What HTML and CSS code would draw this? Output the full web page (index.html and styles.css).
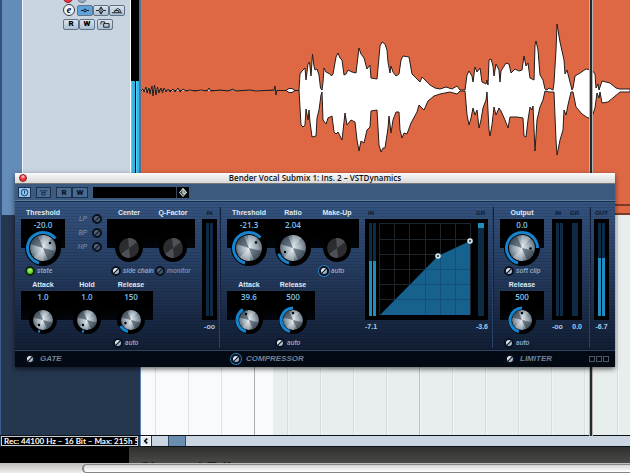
FILE: index.html
```html
<!DOCTYPE html>
<html lang="en">
<head>
<meta charset="utf-8">
<title>VSTDynamics</title>
<link rel="stylesheet" href="styles.css">
</head>
<body>
<svg class="defs" aria-hidden="true">
  <defs>
    <radialGradient id="metal"><stop offset="0" stop-color="#e4eaee"/><stop offset=".6" stop-color="#9dabb6"/><stop offset="1" stop-color="#64727f"/></radialGradient>
    <g id="big"><circle cx="18" cy="18" r="18"/><circle cx="18" cy="18" r="13" fill="url(#metal)"/><path d="M18 18 5.300 14A13 13 0 0 1 13 6zM18 18 30.800 21A13 13 0 0 1 23 30z" fill="#25313c" opacity=".55"/><path d="M18 18 17 5A13 13 0 0 1 26.500 8zM18 18 19 31A13 13 0 0 1 9 27z" fill="#fff" opacity=".3"/></g>
    <g id="small"><circle cx="18" cy="18" r="14"/><circle cx="18" cy="18" r="10" fill="url(#metal)"/><path d="M18 18 8.300 15.500A10 10 0 0 1 14 8.800zM18 18 27.700 20.500A10 10 0 0 1 22 27.200z" fill="#25313c" opacity=".55"/><path d="M18 18 17 8A10 10 0 0 1 24.500 10.500zM18 18 19 28A10 10 0 0 1 11 25z" fill="#fff" opacity=".3"/></g>
    <g id="off"><circle cx="18" cy="18" r="14"/><circle cx="18" cy="18" r="10" fill="#2b2d30"/><path d="M18 18 17 8A10 10 0 0 1 26 12zM18 18 19 28A10 10 0 0 1 10 24z" fill="#5c6064" opacity=".7"/></g>
  </defs>
</svg>

<main class="project">
  <div class="upper">
    <aside class="track">
      <div class="track-panel">
        <div class="row rec"><button class="dot red" aria-label="Record"></button><button class="dot" aria-label="Monitor"></button></div>
        <div class="row">
          <button class="edit" aria-label="Edit">e</button>
          <div class="group">
            <button class="chip on" aria-label="Inserts"><svg viewBox="0 0 15 10"><path d="M3 5h3M9 5h3"/><circle cx="7.500" cy="5" r="1.500"/></svg></button>
            <button class="chip" aria-label="Equalizer"><svg viewBox="0 0 15 10"><path d="M2 5h3M10 5h3M7.500 1 5 5l2.500 4L10 5zM7.500 2v6"/></svg></button>
            <button class="chip" aria-label="Sends"><svg viewBox="0 0 15 10"><path d="M2 7.500h11M5 7V5h4v2M6 4.500l2-2 3 2v2.500"/></svg></button>
          </div>
        </div>
        <div class="row">
          <div class="group"><button class="chip rw">R</button><button class="chip rw">W</button></div>
          <button class="chip" aria-label="Lock"><svg viewBox="0 0 15 10"><path d="M6 4h6v4H6zM3 5V2h4v2"/></svg></button>
        </div>
      </div>
      <div class="level"><i></i><i></i></div>
    </aside>
    <div class="clip">
      <svg class="wave" viewBox="141 0 489 204" preserveAspectRatio="none">
        <path d="M141 90.500H300M460 90.500h8M543 90.500h12"/>
        <path class="quiet" d="M141 91L143 89 144 92 146 87 147 93 149 88 150 94 152 86 153 96 154.500 85 156 95 157.500 87 159 93 161 88 162.500 93 164 88 166 92 168 89 170 92 173 89 175 92 178 88 180 92 183 89 186 91 190 90 195 91 201 90 207 91 209 88 211 91 220 90 228 91 233 89 236 91 250 90 256 91 274 90 275 86 276 95 277 90"/>
        <path class="body" d="M286 90.500l3-2h3l3 2-3 2h-3z"/>
        <path class="body" d="M299 90L300 74 302 71 305 68 306 80 308 64 309.500 62 311 76 312.500 54 314 66 315 70 317 69 319 75 320.500 88 322 90 323 82 324 68 326 72 330 74 331.500 76 333 74 336 57 338 53 340 58 342 60 344 75 346 74 348 70 352 72 356 73 358 56 359 48 361 54 364 58 367 69 370 65 371 78 377 79 378 68 380 46 382 42 385 44 387 50 388 62 390 73 391 66 393 72 396 76 399 74 401 60 403 56 409 57 412 74 416 78 420 82 422 77 426 81 430 85 435 88 440 89 446 87 452 89 457 86 460 90 465 90 467 75 469 71 472 76 473 82 475 67 477 72 480 68 482 82 486 84 487 80 488 85 489 60 491 59 493 66 494 76 496 64 499 70 500 82 501 71 506 63 509 64 511 73 515 69 519 71 522 70 524 56 526 66 528 63 530 78 534 80 535 45 536 41 538 50 540 75 543 80 545 89 547 90 549 88 553 90 554 83 556 50 557 24 560 42 564 60 565 74 567 70 570 82 572 90 573 88 575 76 580 73 586 69 592 70 595 74 596 88 598 84 599 90 602 81 610 83 616 88 620 89 630 89V92L620 92 614 97 608 102 602 103 600 92 599 98 597 93 595 108 592 117 588 118 582 114 576 107 573 92 571 92 568 105 566 115 564 110 563 130 560 140 557 155 556 140 554 92 549 92 545 91 543 100 540 107 537 120 535 151 533 106 532 110 530 107 528 120 526 137 524 136 523 118 517 117 510 117 508 128 505 120 501 111 499 108 496 115 494 107 492 125 490 136 489 130 487 92 486 100 483 108 481 120 479 128 477 110 475 115 473 108 471 118 469 125 467 115 465 91 460 91 457 94 450 92 440 94 434 96 428 101 424 110 419 105 417 112 411 123 407 134 404 133 402 138 400 130 399 112 396 112 393 120 391 133 389 116 388 128 385 148 383 148 381 152 379 145 377 110 371 111 370 127 367 130 364 143 361 141 359 151 357 140 355 122 351 120 347 125 345 113 342 140 338 132 336 134 334 132 332 116 328 118 326 124 323 120 322 92 321 95 319 110 317 118 316 136 312 137 310 122 309 110 308 120 306 109 305 125 303 127 301 125z"/>
      </svg>
      <div class="lane"></div>
    </div>
  </div>
  <div class="lower">
    <div class="empty"></div>
    <div class="grid"><div class="bright"></div></div>
  </div>
  <div class="status">
    <div class="rec-info"><span>Rec: 44100 Hz – 16 Bit – Max: 215h 54</span></div>
    <button class="step" aria-label="Scroll left"><svg viewBox="0 0 10 10"><path d="M6.500 2 3.500 5l3 3"/></svg></button>
    <div class="scroll"><i></i></div>
  </div>
  <div class="cursor"></div>
</main>
<footer class="under">
  <div class="under-bar"><p>Channel Edit</p></div>
  <div class="under-field"><div></div></div>
</footer>

<section class="plugin" aria-label="VSTDynamics">
  <header class="title"><button aria-label="Close"></button><h1>Bender Vocal Submix 1: Ins. 2 – VSTDynamics</h1></header>
  <div class="tools">
    <button class="tool on" aria-label="Power"><svg viewBox="0 0 13 11"><circle cx="6.500" cy="5.500" r="4"/><path d="M6.500 3v4"/></svg></button>
    <button class="tool bypass" aria-label="Bypass"><svg viewBox="0 0 13 11"><path d="M2 3.500h9M4.500 8.500V5.500h4v3z"/></svg></button>
    <div class="pair"><button class="tool">R</button><button class="tool">W</button></div>
    <div class="preset"><input aria-label="Preset" readonly><button aria-label="Presets"><svg viewBox="0 0 12 11"><path d="M6 1.500 9.500 5.500 6 9.500 2.500 5.500z"/><path d="M6 1.500 9.500 5.500 6 7z"/></svg></button></div>
  </div>

  <div class="rack">
    <div class="unit gate">
      <div class="banks">
        <div class="line">
          <div class="bank">
            <div class="dial"><label for="g1">Threshold</label><output>-20.0</output><div class="knob"><svg viewBox="0 0 36 36"><use href="#big"/><circle class="arc" cx="18" cy="18" r="15.500" pathLength="360" stroke-dasharray="218 360" transform="rotate(105 18 18)"/><circle cx="25" cy="13" r="1.200"/></svg><input id="g1" type="range"></div><label class="toggle"><input class="green" type="checkbox" checked>state</label></div>
          </div>
          <div class="filters"><label>LP<input type="checkbox"></label><label>BP<input type="checkbox"></label><label>HP<input type="checkbox"></label></div>
          <div class="bank">
            <div class="dial"><label for="g2">Center</label><output></output><div class="knob"><svg viewBox="0 0 36 36"><use href="#off"/></svg><input id="g2" type="range"></div><label class="toggle"><input class="lit" type="checkbox">side chain</label></div>
            <div class="dial"><label for="g3">Q-Factor</label><output></output><div class="knob"><svg viewBox="0 0 36 36"><use href="#off"/></svg><input id="g3" type="range"></div><label class="toggle dim"><input type="checkbox">monitor</label></div>
          </div>
        </div>
        <div class="line">
          <div class="bank">
            <div class="dial"><label for="g4">Attack</label><output>1.0</output><div class="knob"><svg viewBox="0 0 36 36"><use href="#small"/><circle class="arc" cx="18" cy="18" r="12" pathLength="360" stroke-dasharray="9 360" transform="rotate(105 18 18)"/><circle cx="14" cy="23" r="1.200"/></svg><input id="g4" type="range"></div></div>
            <div class="dial"><label for="g5">Hold</label><output>1.0</output><div class="knob"><svg viewBox="0 0 36 36"><use href="#small"/><circle class="arc" cx="18" cy="18" r="12" pathLength="360" stroke-dasharray="9 360" transform="rotate(105 18 18)"/><circle cx="14" cy="23" r="1.200"/></svg><input id="g5" type="range"></div></div>
            <div class="dial"><label for="g6">Release</label><output>150</output><div class="knob"><svg viewBox="0 0 36 36"><use href="#small"/><circle class="arc" cx="18" cy="18" r="12" pathLength="360" stroke-dasharray="45 360" transform="rotate(105 18 18)"/><circle cx="12.500" cy="21" r="1.200"/></svg><input id="g6" type="range"></div><label class="toggle"><input class="lit" type="checkbox">auto</label></div>
          </div>
        </div>
      </div>
      <div class="meter"><b>IN</b><div class="well"><div class="bars"><i></i><i></i></div></div><span>-oo</span></div>
    </div>

    <div class="unit comp">
      <div class="banks">
        <div class="line">
          <div class="bank">
            <div class="dial"><label for="c1">Threshold</label><output>-21.3</output><div class="knob"><svg viewBox="0 0 36 36"><use href="#big"/><circle class="arc" cx="18" cy="18" r="15.500" pathLength="360" stroke-dasharray="213 360" transform="rotate(105 18 18)"/><circle cx="25" cy="12.500" r="1.200"/></svg><input id="c1" type="range"></div></div>
            <div class="dial"><label for="c2">Ratio</label><output>2.04</output><div class="knob"><svg viewBox="0 0 36 36"><use href="#big"/><circle class="arc" cx="18" cy="18" r="15.500" pathLength="360" stroke-dasharray="53 360" transform="rotate(105 18 18)"/><circle cx="10" cy="22" r="1.200"/></svg><input id="c2" type="range"></div></div>
            <div class="dial"><label for="c3">Make-Up</label><output></output><div class="knob"><svg viewBox="0 0 36 36"><use href="#off"/></svg><input id="c3" type="range"></div><label class="toggle"><input class="blue" type="checkbox" checked>auto</label></div>
          </div>
        </div>
        <div class="line">
          <div class="bank">
            <div class="dial"><label for="c4">Attack</label><output>39.6</output><div class="knob"><svg viewBox="0 0 36 36"><use href="#small"/><circle class="arc" cx="18" cy="18" r="12" pathLength="360" stroke-dasharray="135 360" transform="rotate(105 18 18)"/><circle cx="15" cy="12" r="1.200"/></svg><input id="c4" type="range"></div></div>
            <div class="dial"><label for="c5">Release</label><output>500</output><div class="knob"><svg viewBox="0 0 36 36"><use href="#small"/><circle class="arc" cx="18" cy="18" r="12" pathLength="360" stroke-dasharray="165 360" transform="rotate(105 18 18)"/><circle cx="18" cy="11" r="1.200"/></svg><input id="c5" type="range"></div><label class="toggle"><input class="lit" type="checkbox">auto</label></div>
          </div>
        </div>
      </div>
      <div class="meter graph">
        <div class="ends"><b>IN</b><b>GR</b></div>
        <div class="well">
          <div class="bars"><i class="in-fill"></i><i class="in-fill"></i></div>
          <svg class="curve" viewBox="0 0 96 92">
            <path class="mesh" d="M.500.500h91v91H.500zM15.500 0v92M30.500 0v92M46.500 0v92M61.500 0v92M76.500 0v92M0 16.500h91M0 31.500h91M0 46.500h91M0 61.500h91M0 76.500h91"/>
            <path class="area" d="M1 92 59 33 91 18V92z"/>
            <path class="shade" d="M46.500 46v46M61.500 32v60M76.500 25v67M31 61.500h60M46 46.500h45M16 76.500h75"/>
            <circle cx="59" cy="33" r="2"/><circle cx="91" cy="18" r="2"/>
          </svg>
          <div class="bars"><i class="wide gr-fill"></i></div>
        </div>
        <div class="ends"><span>-7.1</span><span>-3.6</span></div>
      </div>
    </div>

    <div class="unit limit">
      <div class="banks">
        <div class="line"><div class="bank">
          <div class="dial"><label for="l1">Output</label><output>0.0</output><div class="knob"><svg viewBox="0 0 36 36"><use href="#big"/><circle class="arc" cx="18" cy="18" r="15.500" pathLength="360" stroke-dasharray="255 360" transform="rotate(105 18 18)"/><circle cx="26.500" cy="18.500" r="1.200"/></svg><input id="l1" type="range"></div><label class="toggle"><input class="lit" type="checkbox">soft clip</label></div>
        </div></div>
        <div class="line"><div class="bank">
          <div class="dial"><label for="l2">Release</label><output>500</output><div class="knob"><svg viewBox="0 0 36 36"><use href="#small"/><circle class="arc" cx="18" cy="18" r="12" pathLength="360" stroke-dasharray="165 360" transform="rotate(105 18 18)"/><circle cx="18" cy="11" r="1.200"/></svg><input id="l2" type="range"></div><label class="toggle"><input class="lit" type="checkbox">auto</label></div>
        </div></div>
      </div>
      <div class="meter"><div class="ends"><b>IN</b><b>GR</b></div><div class="well two"><div class="bars"><i></i><i></i></div><div class="bars"><i class="wide"></i></div></div><div class="ends"><span>-oo</span><span>0.0</span></div></div>
    </div>

    <div class="unit out">
      <div class="meter"><b>OUT</b><div class="well"><div class="bars"><i class="out-fill"></i><i class="out-fill"></i></div></div><span>-6.7</span></div>
    </div>
  </div>

  <footer class="names">
    <label><input class="lit" type="checkbox">GATE</label>
    <label><input class="blue" type="checkbox" checked>COMPRESSOR</label>
    <label><input class="lit" type="checkbox">LIMITER</label>
    <div class="boxes"><i></i><i></i><i></i></div>
  </footer>
</section>
</body>
</html>
```
FILE: styles.css
```css
* { box-sizing: border-box; }
html, body { height: 100%; }
body {
  margin: 0;
  overflow: hidden;
  display: flex;
  flex-direction: column;
  position: relative;
  background: #000;
  font-family: "Open Sans", "Noto Sans", sans-serif;
  font-size: 8px;
}
button { padding: 0; margin: 0; border: 0; font: inherit; color: inherit; background: none; }
.defs { position: absolute; width: 0; height: 0; }

/* project window */
.project { flex: 1; display: flex; flex-direction: column; position: relative; min-height: 0; }
.upper { display: flex; height: 215px; }
.track {
  width: 141px;
  display: flex;
  background: #638cb8;
  border-left: 2px solid #32517f;
  border-right: 2px solid #4f7391;
  padding-left: 20px;
}
.track-panel {
  flex: 1;
  background: #c9d4e1;
  border-left: 1px solid #eef3f8;
  border-right: 1px solid #fff;
  display: flex;
  flex-direction: column;
  gap: 4px;
  padding: 1px 0 0 40px;
}
.row { display: flex; align-items: center; gap: 2px; height: 10px; }
.row.rec { height: 0; gap: 4px; align-items: flex-end; }
.dot { width: 10px; height: 10px; border-radius: 50%; background: #9db0c4; border: 1px solid #60748a; }
.row.rec .dot { margin-bottom: -2px; }
.dot.red { background: #f0303a; border-color: #8c1c26; }
.edit { width: 12px; height: 12px; border: 1px solid #333c46; border-radius: 50%; background: #eef3f7; font: italic bold 10px/8px "Liberation Serif", serif; color: #000; }
.group { display: flex; }
.chip { width: 16px; height: 11px; border: 1px solid #5f7488; border-radius: 2px; background: linear-gradient(#dce5ee, #a9bdd2); color: #000; }
.chip.on { background: #5fa3dc; }
.chip svg { display: block; width: 14px; height: 9px; fill: none; stroke: #111; stroke-width: 1; }
.chip.rw { font: 900 8px/8px Roboto, sans-serif; }
.level { width: 8px; background: #000; padding-top: 81px; display: flex; gap: 1px; }
.level i { flex: 1; background: #38b4e4; border-left: 1px solid #55d0f5; }

.clip { flex: 1; display: flex; flex-direction: column; background: #df6844; border-bottom: 2px solid #7c3a26; }
.wave { display: block; width: 100%; height: 204px; fill: none; stroke: #241c1a; stroke-width: 1; }
.wave .body { fill: #fff; }
.wave .quiet { fill: #cfc4bf; }
.lane { flex: 1; border-top: 2px solid #7c3a26; }

.lower { flex: 1; display: flex; }
.empty { width: 141px; background: #25364f; border-left: 1px solid #3d5d8a; border-right: 1px solid #5a84b4; }
.grid {
  flex: 1;
  background:
    linear-gradient(90deg, transparent 278px, #b9c1c5 278px 279px, transparent 279px),
    repeating-linear-gradient(90deg, transparent 0 14px, #d6dde0 14px 15px, #f1f4f5 15px 16px, transparent 16px 33px) #e8edee;
}
.bright {
  width: 132px;
  height: 100%;
  background:
    linear-gradient(90deg, transparent 113px, #a9afb5 113px 114px, transparent 114px),
    repeating-linear-gradient(90deg, transparent 0 14px, #dfe3e6 14px 15px, transparent 15px 33px) #f9fafb;
}
.cursor { position: absolute; top: 0; bottom: 11px; left: calc(100% - 41px); width: 4px; background: #24292c; border: solid #b9b3b0; border-width: 0 1px; }

.status { display: flex; height: 12px; background: #cbd6e3; border: solid #0d1218; border-width: 1px 0; }
.rec-info { width: 141px; padding: 0 2px 0 1px; background: #25364f; border-right: 1px solid #5a84b4; }
.rec-info span { display: block; height: 10px; overflow: hidden; white-space: nowrap; border: 1px solid #c9ccd0; background: #000; color: #fff; font: bold 8px/8px Lato, sans-serif; padding-left: 2px; }
.step { width: 10px; border: 1px solid #fff; background: #e3eaf2; }
.step svg { display: block; width: 8px; height: 8px; fill: none; stroke: #000; stroke-width: 2; }
.scroll { flex: 1; border-left: 1px solid #334; padding-left: 16px; }
.scroll i { display: block; width: 18px; height: 10px; background: #6a8db0; border: solid #334a66; border-width: 0 1px; }

.under-bar { height: 16px; overflow: hidden; background: linear-gradient(#30302e, #4a4a47); border-left: 129px solid #000; }
.under-bar p { margin: 0; padding: 12px 0 0 10px; font: bold 16px/20px "Liberation Sans", sans-serif; color: #1c1c1b; }
.under-field { height: 10px; background: linear-gradient(#bdbcba, #efeeec); padding: 1px 0 0 82px; }
.under-field div { height: 9px; border: 1px solid #858585; border-width: 1px 0 1px 2px; border-radius: 5px 0 0 5px; background: linear-gradient(#d5d5d5, #fff); }

/* plug-in window */
.plugin { position: absolute; left: 15px; right: 15px; top: 173px; box-shadow: 0 2px 5px #0009; color: #dfe9f3; }
.title { display: flex; height: 11px; align-items: center; background: linear-gradient(#fafafa, #d8d8d8); color: #111; padding-left: 4px; border-bottom: 1px solid #777; }
.title button { width: 8px; height: 8px; border-radius: 50%; border: 1px solid #8f2023; background: radial-gradient(circle at 50% 25%, #ffd0d0, #ea3038 50%); }
.title h1 { flex: 1; margin: 0; font-size: 8px; line-height: 10px; font-weight: 600; text-align: center; padding-right: 12px; }
.tools { display: flex; align-items: center; height: 18px; padding-left: 3px; gap: 5px; background: #3c5a80; border-bottom: 1px solid #1b2c47; box-shadow: inset 0 -1px #5b7ba2; }
.tool { display: block; width: 15px; height: 11px; border: 1px solid #1c2f4b; background: #496a92; color: #0a1322; font: 900 8px/9px Roboto, sans-serif; }
.tool.on { width: 13px; background: #8cc4f4; }
.tool svg { display: block; width: 100%; height: 9px; fill: none; stroke: #0c2345; stroke-width: 1; }
.pair { display: flex; }
.pair .tool { width: 16px; }
.preset { display: flex; width: 96px; height: 11px; background: #000; }
.preset input { width: 83px; height: 11px; border: 0; padding: 0 3px; background: #000; color: #9cd0f0; font: inherit; }
.preset button { width: 13px; border-left: 1px solid #39475a; }
.preset svg { display: block; width: 12px; height: 11px; fill: #bfd3da; fill-opacity: .4; stroke: #cfdfe4; stroke-width: 1; }

.rack {
  display: flex;
  justify-content: space-between;
  padding: 5px 0 2px;
  background: repeating-linear-gradient(#0000 0 2px, #0000001c 2px 3px), linear-gradient(#34537f, #253c60 45%, #111d33);
}
.unit { display: flex; position: relative; }
.gate { padding: 0 3px 0 6px; gap: 7px; }
.comp { padding: 0 5px 0 6px; gap: 6px; }
.limit { padding: 0 8px 0 6px; gap: 8px; }
.out { padding: 0 6px 0 3px; }
.comp, .limit, .out { border-left: 1px solid #12203a; box-shadow: -1px 0 #2a426a; }
.banks { display: flex; flex-direction: column; gap: 3px; }
.line, .bank { display: flex; }
.bank { height: 69px; background: linear-gradient(#000, #000 60%, #02060c) 0 12px / 100% 29px no-repeat; }
.dial { width: 44px; display: flex; flex-direction: column; align-items: center; white-space: nowrap; }
.dial > label:first-child { height: 12px; font: bold 7px/12px "Liberation Sans", sans-serif; }
.dial output { height: 11px; line-height: 12px; font-size: 8px; font-weight: 600; color: #7cc4ef; }
.knob { width: 36px; height: 36px; position: relative; }
.knob svg { display: block; width: 36px; height: 36px; }
.knob input { position: absolute; inset: 0; width: 36px; height: 36px; margin: 0; opacity: 0; }
.arc { fill: none; stroke: #1583cd; stroke-width: 3; }
.toggle { align-self: stretch; height: 10px; }
.toggle, .filters label { display: flex; align-items: center; gap: 2px; font: italic 500 7px/10px Roboto, sans-serif; color: #95abc8; }
.toggle { padding-left: 4px; }
.toggle.dim { color: #7a91b2; }
.plugin input[type="checkbox"] {
  appearance: none; flex: none; margin: 0; width: 10px; height: 10px; border-radius: 50%; border: 2px solid #0a1220;
  background: linear-gradient(135deg, #55657a 40%, #141d2b 45% 55%, #46566b 60%);
}
.plugin input[type="checkbox"].lit { background: linear-gradient(135deg, #dfe8ee 40%, #14202e 45% 55%, #a8bccb 60%); }
.plugin input[type="checkbox"].blue { background: linear-gradient(135deg, #dfe8ee 40%, #14202e 45% 55%, #a8bccb 60%); border-color: #0b1526; box-shadow: 0 0 0 1px #2487c8; }
.plugin input[type="checkbox"].green { border-color: #122314; background: radial-gradient(circle at 50% 30%, #b4ff7a, #4bd015 70%); }
.filters { width: 42px; display: flex; flex-direction: column; align-items: flex-end; gap: 4px; padding: 7px 5px 0 0; }
.filters label { gap: 5px; color: #6d84a4; }

.meter { display: flex; flex-direction: column; align-items: center; }
.meter b { font: bold 6px/12px "Liberation Sans", sans-serif; color: #0d1a30; }
.meter span { font: bold 7px/14px "Liberation Sans", sans-serif; color: #a5cdec; }
.well { display: flex; gap: 4px; height: 101px; padding: 4px; background: #000; justify-content: space-between; }
.graph .well { gap: 3px; }
.two { width: 30px; }
.bars { display: flex; gap: 1px; }
.bars i { width: 3px; background: #0d2b45; }
.bars .wide { width: 6px; }
.bars .in-fill { background: linear-gradient(#0d2b45 41%, #1f8dbf 41%); }
.bars .out-fill { background: linear-gradient(#0d2b45 38%, #1f8dbf 38%); }
.bars .gr-fill { background: linear-gradient(#1f8dbf 5%, #0d2b45 5%); }
.ends { display: flex; justify-content: space-between; align-self: stretch; padding: 0 3px; }
.ends:last-child { padding: 0; }
.curve { display: block; width: 96px; height: 92px; }
.mesh { fill: none; stroke: #1d252c; }
.area { fill: #17618e; }
.shade { stroke: #125078; }
.curve circle { fill: #34607a; stroke: #e4eef2; stroke-width: 1.500; }

.names { display: grid; grid-template-columns: 206px 274px 1fr auto; align-items: center; height: 17px; padding: 0 6px 0 10px; background: #040a14; border-top: 1px solid #2d4261; }
.names label { display: flex; align-items: center; gap: 5px; font: italic bold 8px/12px "Liberation Sans", sans-serif; color: #71839a; }
.boxes { display: flex; gap: 1px; }
.boxes i { width: 6px; height: 6px; border: 1px solid #4b5564; }
```
